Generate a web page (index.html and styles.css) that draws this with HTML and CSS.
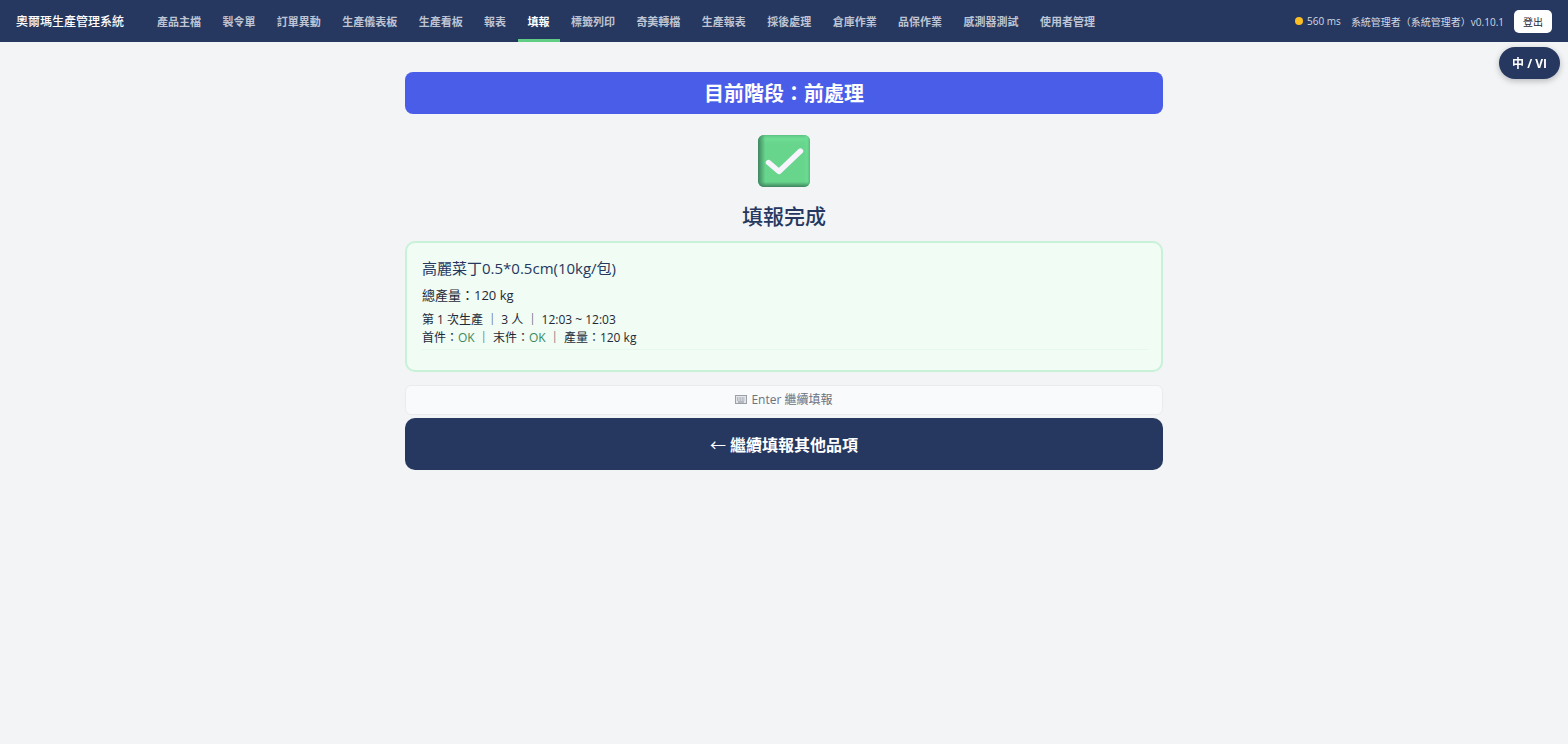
FILE: index.html
```html
<!DOCTYPE html>
<html lang="zh-Hant">
  <head>
    <meta charset="UTF-8" />
    <meta name="viewport" content="width=device-width, initial-scale=1.0" />
    <title>奧爾瑪生產管理系統</title>
    <link rel="stylesheet" href="styles.css">
  </head>
  <body>
    <header class="topbar">
      <div class="brand">奧爾瑪生產管理系統</div>
      <nav class="nav">
        <a href="#">產品主檔</a>
        <a href="#">製令單</a>
        <a href="#">訂單異動</a>
        <a href="#">生產儀表板</a>
        <a href="#">生產看板</a>
        <a href="#">報表</a>
        <a href="#" class="active">填報</a>
        <a href="#">標籤列印</a>
        <a href="#">奇美轉檔</a>
        <a href="#">生產報表</a>
        <a href="#">採後處理</a>
        <a href="#">倉庫作業</a>
        <a href="#">品保作業</a>
        <a href="#">感測器測試</a>
        <a href="#">使用者管理</a>
      </nav>
      <div class="user">
        <span class="ping"><span class="dot"></span>560 ms</span>
        <span>系統管理者（系統管理者）v0.10.1</span>
        <button class="logout" type="button">登出</button>
      </div>
    </header>

    <button class="lang-btn" type="button">中 / VI</button>

    <main class="page">
      <div class="stage">目前階段：前處理</div>

      <!-- Done icon -->
      <svg class="done-icon" viewBox="0 0 52 52" aria-hidden="true">
        <defs>
          <linearGradient id="left" x1="0" x2="1" y1="0" y2="0">
            <stop offset="0" stop-color="#3f8560" />
            <stop offset="0.14" stop-color="#3f8560" stop-opacity="0" />
          </linearGradient>
          <linearGradient id="bottom" x1="0" x2="0" y1="1" y2="0">
            <stop offset="0" stop-color="#3f8560" />
            <stop offset="0.1" stop-color="#3f8560" stop-opacity="0" />
          </linearGradient>
          <linearGradient id="right" x1="1" x2="0" y1="0" y2="0">
            <stop offset="0" stop-color="#55b67b" />
            <stop offset="0.06" stop-color="#70df97" stop-opacity="0.6" />
            <stop offset="0.14" stop-color="#67d58c" stop-opacity="0" />
          </linearGradient>
          <linearGradient id="top" x1="0" x2="0" y1="0" y2="1">
            <stop offset="0" stop-color="#5cc283" />
            <stop offset="0.08" stop-color="#72e599" stop-opacity="0.6" />
            <stop offset="0.2" stop-color="#67d58c" stop-opacity="0" />
          </linearGradient>
        </defs>
        <rect width="52" height="52" rx="6" fill="#67d58c" />
        <rect width="52" height="52" rx="6" fill="url(#top)" />
        <rect width="52" height="52" rx="6" fill="url(#right)" />
        <rect width="52" height="52" rx="6" fill="url(#left)" />
        <rect width="52" height="52" rx="6" fill="url(#bottom)" />
        <path d="M10.5 27.5 L21 36.5 L42.5 16" fill="none" stroke="#f8f4fd" stroke-width="5.4" stroke-linecap="round" stroke-linejoin="round" />
      </svg>
      <h1>填報完成</h1>

      <section class="summary">
        <div class="product">高麗菜丁0.5*0.5cm(10kg/包)</div>
        <div class="total">總產量：120 kg</div>
        <div class="record">
          <div>第 1 次生產 ｜ 3 人 ｜ 12:03 ~ 12:03</div>
          <div>首件：<span class="ok">OK</span> ｜ 末件：<span class="ok">OK</span> ｜ 產量：120 kg</div>
        </div>
      </section>

      <div class="hint">
        <svg class="key-icon" viewBox="0 0 12 10" aria-hidden="true">
          <rect x="0.5" y="0.5" width="11" height="8" fill="#e3e5e9" stroke="#9a9fa8" />
          <path d="M2 3h8M2 5h8" stroke="#858b95" stroke-dasharray="1 0.6" />
          <path d="M3 7h6" stroke="#858b95" />
        </svg>
        Enter 繼續填報
      </div>
      <button class="continue-btn" type="button"><span class="arrow">←</span> 繼續填報其他品項</button>
    </main>
  </body>
</html>
```

FILE: styles.css
```css
* {
  margin: 0;
  padding: 0;
  box-sizing: border-box;
}

body {
  background: #f2f4f6;
  color: #1f2937;
  font-family: "Open Sans", "Noto Sans CJK TC", sans-serif;
  min-height: 100vh;
}

button {
  font-family: inherit;
  border: none;
  cursor: pointer;
}

.topbar {
  display: flex;
  align-items: center;
  height: 42px;
  padding: 0 16px;
  background: #26385f;
  color: white;
  white-space: nowrap;
}

.brand {
  flex-shrink: 0;
  width: 131px;
  font-size: 12px;
  font-weight: 500;
}

.nav {
  display: flex;
  flex: 1;
  justify-content: space-between;
  align-self: stretch;
  max-width: 958px;
}

.nav a {
  display: flex;
  align-items: center;
  padding: 0 10px;
  border-top: 3px solid transparent;
  border-bottom: 3px solid transparent;
  color: #bec4d3;
  font-size: 11px;
  font-weight: 700;
  text-decoration: none;
}

.nav a.active {
  color: white;
  border-bottom-color: #60cd85;
}

.user {
  display: flex;
  align-items: center;
  gap: 10px;
  margin-left: auto;
  color: #d3d8e2;
  font-size: 10px;
}

.ping {
  display: flex;
  align-items: center;
  gap: 4px;
}

.dot {
  width: 8px;
  height: 8px;
  border-radius: 50%;
  background: #fbbf24;
}

.logout {
  width: 38px;
  height: 23px;
  border-radius: 5px;
  background: white;
  color: #1f2937;
  font-size: 10px;
}

.lang-btn {
  position: fixed;
  top: 47px;
  right: 8px;
  width: 61px;
  height: 32px;
  border-radius: 16px;
  background: #26385f;
  color: white;
  font-size: 12px;
  font-weight: 700;
  box-shadow: 0 2px 6px rgba(0, 0, 0, 0.25);
}

.page {
  display: flex;
  flex-direction: column;
  max-width: 758px;
  margin: 30px auto;
}

.stage {
  padding: 7px 6px 5px;
  border-radius: 8px;
  background: #4a5de8;
  color: white;
  font-size: 20px;
  font-weight: 700;
  line-height: 30px;
  text-align: center;
}

.done-icon {
  width: 52px;
  height: 52px;
  margin: 21px auto 14px;
}

h1 {
  margin-bottom: 10px;
  color: #26385f;
  font-size: 21px;
  font-weight: 500;
  line-height: 30px;
  text-align: center;
}

.summary {
  padding: 13px 13px 20px 15px;
  border: 2px solid #c8f2d7;
  border-radius: 10px;
  background: #f0fcf4;
}

.product {
  margin-bottom: 5px;
  color: #26385f;
  font-size: 15px;
  line-height: 24px;
}

.total {
  margin-bottom: 6px;
  font-size: 13px;
  line-height: 20px;
}

.record {
  padding-bottom: 2px;
  border-bottom: 1px solid #e6f7ec;
  font-size: 12px;
  line-height: 18px;
}

.ok {
  color: #3c8a5c;
}

.hint {
  display: flex;
  align-items: center;
  justify-content: center;
  gap: 4px;
  margin: 13px 0 3px;
  border: 1px solid #e9ebef;
  border-radius: 6px;
  background: #f9fafc;
  color: #6b7280;
  font-size: 12px;
  line-height: 28px;
}

.key-icon {
  width: 12px;
  height: 10px;
}

.continue-btn {
  padding: 14px 13px 12px;
  border-radius: 10px;
  background: #26385f;
  color: white;
  font-size: 16px;
  font-weight: 700;
  line-height: 26px;
}

.arrow {
  font-family: "Noto Sans CJK TC", sans-serif;
  font-weight: 400;
  line-height: 1;
}
```
